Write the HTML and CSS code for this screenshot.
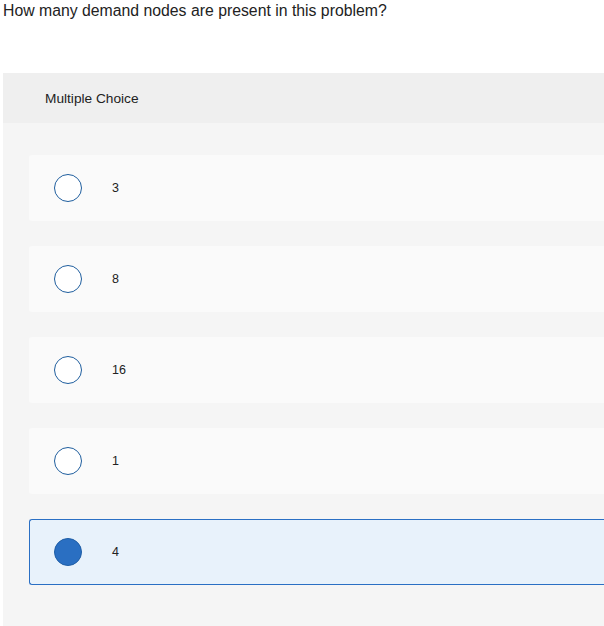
FILE: index.html
```html
<!DOCTYPE html>
<html>
<head>
<meta charset="utf-8">
<link rel="stylesheet" href="styles.css">
</head>
<body>
<p class="question">How many demand nodes are present in this problem?</p>
<div class="panel">
  <div class="panel-header">Multiple Choice</div>
  <div class="panel-body">
    <div class="option"><span class="radio"></span><span class="label">3</span></div>
    <div class="option"><span class="radio"></span><span class="label">8</span></div>
    <div class="option"><span class="radio"></span><span class="label">16</span></div>
    <div class="option"><span class="radio"></span><span class="label">1</span></div>
    <div class="option selected"><span class="radio"></span><span class="label">4</span></div>
  </div>
</div>
</body>
</html>
```
FILE: styles.css
```css
html, body {
  margin: 0;
  padding: 0;
  background: #ffffff;
  overflow: hidden;
}
body {
  font-family: "Liberation Sans", Arial, sans-serif;
  color: #222222;
}
.question {
  margin: 0;
  padding: 2px 0 0 3px;
  font-size: 15.8px;
  line-height: 18px;
  height: 73px;
  box-sizing: border-box;
}
.panel {
  margin-left: 3px;
  background: #f5f5f5;
  height: 553px;
}
.panel-header {
  height: 50px;
  background: #efefef;
  display: flex;
  align-items: center;
  padding-left: 42px;
  font-size: 13.7px;
  color: #222222;
}
.panel-body {
  padding: 32px 0 0 26px;
  display: flex;
  flex-direction: column;
  gap: 25px;
}
.option {
  height: 66px;
  box-sizing: border-box;
  background: #fafafa;
  border: 1px solid transparent;
  border-right: 0;
  border-radius: 3px 0 0 3px;
  display: flex;
  align-items: center;
  padding-left: 24px;
  gap: 30px;
}
.radio {
  width: 28px;
  height: 28px;
  box-sizing: border-box;
  border-radius: 50%;
  border: 1.5px solid #1f5e9e;
  background: #ffffff;
  flex: none;
}
.label {
  font-size: 12.5px;
  color: #222222;
}
.option.selected {
  background: #e8f2fb;
  border-color: #2a6fc4;
}
.option.selected .radio {
  background: #2a6fc2;
  border-color: #1f5ea6;
}
```
